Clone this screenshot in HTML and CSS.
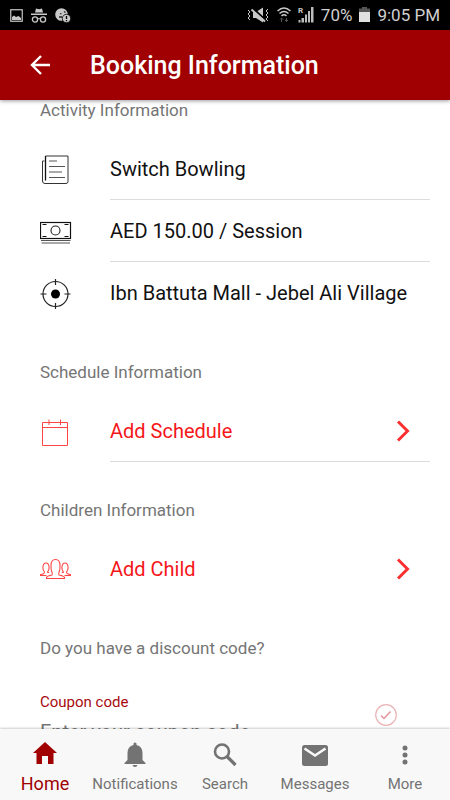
FILE: index.html
```html
<!DOCTYPE html>
<html lang="en">
<head>
  <meta charset="UTF-8">
  <meta name="viewport" content="width=device-width, initial-scale=1.0">
  <title>Booking Information</title>
  <link rel="stylesheet" href="styles.css">
</head>
<body>
  <div class="status-bar">
    <div class="status-left">
      <svg width="13" height="13" viewBox="0 0 13 13">
        <rect x="0.75" y="0.75" width="11.5" height="11.5" fill="none" stroke="#c8c8c8" stroke-width="1.2"/>
        <path d="M2 11V8l2-1.5L6 8l2.500-1L11 9v2z" fill="#c8c8c8"/>
      </svg>
      <svg width="16" height="15" viewBox="0 0 16 15">
        <path d="M4 4.500L5 .5l3 .8 3-.8 1 4zM0 5.500h16V7H0z" fill="#c8c8c8"/>
        <circle cx="4" cy="11.500" r="2.600" fill="none" stroke="#c8c8c8" stroke-width="1.300"/>
        <circle cx="12" cy="11.500" r="2.600" fill="none" stroke="#c8c8c8" stroke-width="1.300"/>
        <path d="M6.500 11q1.500-1 3 0" fill="none" stroke="#c8c8c8"/>
      </svg>
      <svg width="16" height="15" viewBox="0 0 16 15">
        <circle cx="6.500" cy="6.500" r="6.300" fill="#c8c8c8"/>
        <path d="M5 5.500l1.500.5M9 3.500l1.500 1M4 9h3" stroke="#222" stroke-width="1.300"/>
        <circle cx="11.500" cy="10.500" r="4.200" fill="#c8c8c8" stroke="#000" stroke-width=".8"/>
        <path d="M11.500 8v3M11.500 12v1.300" stroke="#000" stroke-width="1.300"/>
      </svg>
    </div>
    <div class="status-right">
      <svg class="mute" width="23" height="16" viewBox="0 0 23 16">
        <path d="M6 5h3l7-4.500v15L9 11H6z" fill="#c8c8c8"/>
        <path d="M6 1.500l13 12" stroke="#000" stroke-width="2"/>
        <path d="M4.500 2.500L18 14.500" stroke="#c8c8c8" stroke-width="2"/>
        <path d="M1 3l2 2-2 2 2 2-2 2 2 2M21 2l-2 2 2 2-2 2 2 2-2 2 2 2" fill="none" stroke="#c8c8c8"/>
      </svg>
      <svg class="wifi" width="14" height="16" viewBox="0 0 14 16">
        <path d="M.5 4q6.500-6 13 0M2.500 6.500q4.500-4 9 0M4.500 9q2.500-2.500 5 0" fill="none" stroke="#c8c8c8" stroke-width="1.500"/>
        <path d="M3 12.500l1.500-1.500 1.500 1.500M8 13l1.500 1.500L11 13M4.500 11v4M9.500 11v4" fill="none" stroke="#555"/>
      </svg>
      <svg class="signal" width="16" height="16" viewBox="0 0 16 16">
        <text x="0" y="6" class="roaming">R</text>
        <path d="M.5 13h2v2.500h-2zM3.500 11h2.500v4.500H3.500zM7 7.500h2v8H7zM10 4h2v11.500h-2zM13 0h2.500v15.500H13z" fill="#bbb"/>
      </svg>
      <span class="percent">70%</span>
      <svg class="battery" width="11" height="16" viewBox="0 0 11 16">
        <path d="M3 0h5v1.500h3V5H0V1.500h3z" fill="#555"/>
        <path d="M0 5h11v10H0z" fill="#e0e0e0"/>
      </svg>
      <span>9:05 PM</span>
    </div>
  </div>

  <header class="app-bar">
    <button class="back" aria-label="Back">
      <svg width="20" height="20" viewBox="0 0 20 20">
        <path d="M20 10H2M11 1L2 10l9 9" fill="none" stroke="#fff" stroke-width="2.400"/>
      </svg>
    </button>
    <h1>Booking Information</h1>
  </header>

  <main>
    <section>
      <h2>Activity Information</h2>
      <div class="row">
        <svg class="row-icon" width="32" height="32" viewBox="0 0 32 32">
          <path d="M5.500 2H28v25.500q0 2-2 2H5q-2.500 0-2.500-2.500V7h2" fill="none" stroke="#333"/>
          <path d="M5.500 2v24.500" stroke="#111" stroke-width="1.300"/>
          <path d="M9 7h8M9 12.500h16M9 18h13M9 23.500h16" stroke="#555"/>
        </svg>
        <div class="row-text">Switch Bowling</div>
      </div>
      <div class="row">
        <svg class="row-icon" width="32" height="32" viewBox="0 0 32 32">
          <rect x="0.5" y="6.500" width="30" height="16" fill="none" stroke="#111" stroke-width="1.200"/>
          <circle cx="15.500" cy="14.500" r="4.500" fill="none" stroke="#222" stroke-width="1.100"/>
          <path d="M2.500 8.500h4M24.500 8.500h4M2.500 20.500h4M24.500 20.500h4" stroke="#111"/>
          <path d="M1 24.500h29.500M1.500 27h28.500" stroke="#555" stroke-width="1.200"/>
        </svg>
        <div class="row-text">AED 150.00 / Session</div>
      </div>
      <div class="row last">
        <svg class="row-icon" width="32" height="32" viewBox="0 0 32 32">
          <circle cx="15.500" cy="16" r="12.500" fill="none" stroke="#222" stroke-width="1.200"/>
          <circle cx="15.500" cy="16" r="4.500" fill="#000"/>
          <path d="M15.500 1v6M15.500 25v6M.5 16h6M24.500 16h6" stroke="#222" stroke-width="1.200"/>
        </svg>
        <div class="row-text">Ibn Battuta Mall - Jebel Ali Village</div>
      </div>
    </section>

    <section>
      <h2>Schedule Information</h2>
      <button class="row action">
        <svg class="row-icon" width="32" height="32" viewBox="0 0 32 32">
          <path d="M2.500 6.500h25v23h-25zM2.500 11.500h25M9 3.500v5.500M20.500 3.500v5.500" fill="none" stroke="#f44"/>
        </svg>
        <span class="row-text">Add Schedule
          <svg width="14" height="22" viewBox="0 0 14 22"><path d="M2 1.500l9.500 9.500L2 20.500" fill="none" stroke="#fb3030" stroke-width="3"/></svg>
        </span>
      </button>
    </section>

    <section>
      <h2>Children Information</h2>
      <button class="row action last">
        <svg class="row-icon" width="32" height="32" viewBox="0 0 32 32">
          <g fill="none" stroke="#f44" stroke-width="1.100">
            <path d="M6.500 24.500v-1q.5-1.500 5.500-2.500.5-.5 0-3-1-1-1-6.500 0-6 4.500-6t4.500 6q0 5.500-1 6.500-.5 2.500 0 3 5 1 5.500 2.500v1z"/>
            <path d="M9 18q-.5 1-1.500 0 2-2.500 1.500-5.500-.5-3.500-3-3.500t-3 3.500q-.5 3 1.500 5.500 0 2-4 2.500v1h6M22 18q.5 1 1.500 0-2-2.500-1.500-5.500.5-3.500 3-3.500t3 3.500q.5 3-1.500 5.500 0 2 4 2.500v1h-6"/>
          </g>
        </svg>
        <span class="row-text">Add Child
          <svg width="14" height="22" viewBox="0 0 14 22"><path d="M2 1.500l9.500 9.500L2 20.500" fill="none" stroke="#fb3030" stroke-width="3"/></svg>
        </span>
      </button>
    </section>

    <section>
      <h2>Do you have a discount code?</h2>
      <form class="coupon">
        <div class="field">
          <label for="coupon">Coupon code</label>
          <input type="text" id="coupon" placeholder="Enter your coupon code">
        </div>
        <button type="button" class="apply" aria-label="Apply coupon">
          <svg width="22" height="22" viewBox="0 0 22 22">
            <circle cx="11" cy="11" r="10.300" fill="none" stroke="#eab4b6" stroke-width="1.200"/>
            <path d="M6 11.500l3 3 6.500-7" fill="none" stroke="#e2949a" stroke-width="1.500"/>
          </svg>
        </button>
      </form>
    </section>
  </main>

  <nav>
    <a href="#" class="active">
      <svg width="26" height="26" viewBox="0 0 26 26">
        <path d="M13 1l12 11h-3.500v11H16v-8h-6v8H4.500V12H1z" fill="#a00002"/>
      </svg>
      Home
    </a>
    <a href="#">
      <svg width="26" height="26" viewBox="0 0 26 26">
        <path d="M11.500 2.500q1.500-2 3 0v1.500q6 1.500 6 8v7l3 3v1h-21v-1l3-3v-7q0-6.500 6-8zM10.500 24h5q-.5 2-2.500 2t-2.500-2z" fill="#737373"/>
      </svg>
      Notifications
    </a>
    <a href="#">
      <svg width="26" height="26" viewBox="0 0 26 26">
        <circle cx="10" cy="10.500" r="7" fill="none" stroke="#737373" stroke-width="2.600"/>
        <path d="M15 15.500l8.500 8.500" stroke="#737373" stroke-width="3.200"/>
      </svg>
      Search
    </a>
    <a href="#">
      <svg width="26" height="26" viewBox="0 0 26 26">
        <rect x="0" y="4" width="26" height="21" rx="2.500" fill="#737373"/>
        <path d="M2.500 7.500L13 14.500l10.500-7" fill="none" stroke="#f8f8f8" stroke-width="2.600"/>
      </svg>
      Messages
    </a>
    <a href="#">
      <svg width="26" height="26" viewBox="0 0 26 26">
        <g fill="#737373"><circle cx="13" cy="7" r="2.500"/><circle cx="13" cy="14" r="2.500"/><circle cx="13" cy="21" r="2.500"/></g>
      </svg>
      More
    </a>
  </nav>
</body>
</html>
```
FILE: styles.css
```css
* {
  box-sizing: border-box;
}

body {
  font-family: Roboto, sans-serif;
  margin: 0;
  height: 100vh;
  display: flex;
  flex-direction: column;
  background-color: #fff;
  overflow: hidden;
}

button {
  font-family: inherit;
  border: none;
  background: none;
  padding: 0;
  text-align: left;
  cursor: pointer;
}

svg {
  display: block;
  flex-shrink: 0;
}

/* Status bar */
.status-bar {
  display: flex;
  justify-content: space-between;
  align-items: center;
  height: 30px;
  flex-shrink: 0;
  padding: 0 10px;
  background-color: #000;
  color: #d0d0d0;
  font-size: 17px;
}

.status-left,
.status-right {
  display: flex;
  align-items: center;
  gap: 8px;
}

.status-right {
  gap: 7px;
}

.roaming {
  font-size: 8px;
  font-weight: bold;
  fill: #c8c8c8;
}

/* Title bar */
.app-bar {
  display: flex;
  align-items: center;
  gap: 40px;
  height: 70px;
  flex-shrink: 0;
  padding: 0 30px;
  background-color: #a00002;
  box-shadow: 0 1px 4px rgba(0, 0, 0, 0.4);
  z-index: 1;
}

.app-bar h1 {
  margin: 0;
  font-size: 25px;
  font-weight: 500;
  color: #fff;
}

/* Content */
main {
  flex: 1;
  min-height: 0;
  overflow: hidden;
  padding: 0 20px 0 40px;
}

section {
  margin-bottom: 38px;
}

h2 {
  margin: 0 0 18px;
  font-size: 17px;
  line-height: 20px;
  font-weight: 400;
  color: #757575;
}

.row {
  display: flex;
  align-items: center;
  gap: 38px;
  width: 100%;
  height: 62px;
  font-size: 20px;
  color: #111;
}

.row-icon {
  margin-top: 2px;
}

.row-text {
  flex: 1;
  height: 100%;
  display: flex;
  align-items: center;
  justify-content: space-between;
  border-bottom: 1px solid #dcdcdc;
}

.last .row-text {
  border-bottom-color: transparent;
}

.action {
  color: #f5161a;
}

.action .row-text {
  padding-right: 20px;
}

.coupon {
  display: flex;
  justify-content: space-between;
  padding: 16px 33px 0 0;
}

.field {
  flex: 1;
}

.field label {
  display: block;
  font-size: 15px;
  line-height: 20px;
  color: #a80a10;
}

.field input {
  width: 100%;
  height: 40px;
  border: none;
  outline: none;
  padding: 0;
  background: none;
  font-family: inherit;
  font-size: 20px;
}

.field input::placeholder {
  color: #757575;
}

.apply {
  align-self: flex-start;
  margin-top: 12px;
}

/* Bottom tabs */
nav {
  display: flex;
  height: 71px;
  flex-shrink: 0;
  background-color: #f8f8f8;
  box-shadow: 0 -1px 2px rgba(0, 0, 0, 0.2);
  z-index: 1;
}

nav a {
  flex: 1 1 0;
  display: flex;
  flex-direction: column;
  align-items: center;
  gap: 7px;
  padding-top: 12px;
  font-size: 15px;
  line-height: 20px;
  color: #737373;
  text-decoration: none;
}

nav .active {
  font-size: 18px;
  color: #a00002;
}
```
